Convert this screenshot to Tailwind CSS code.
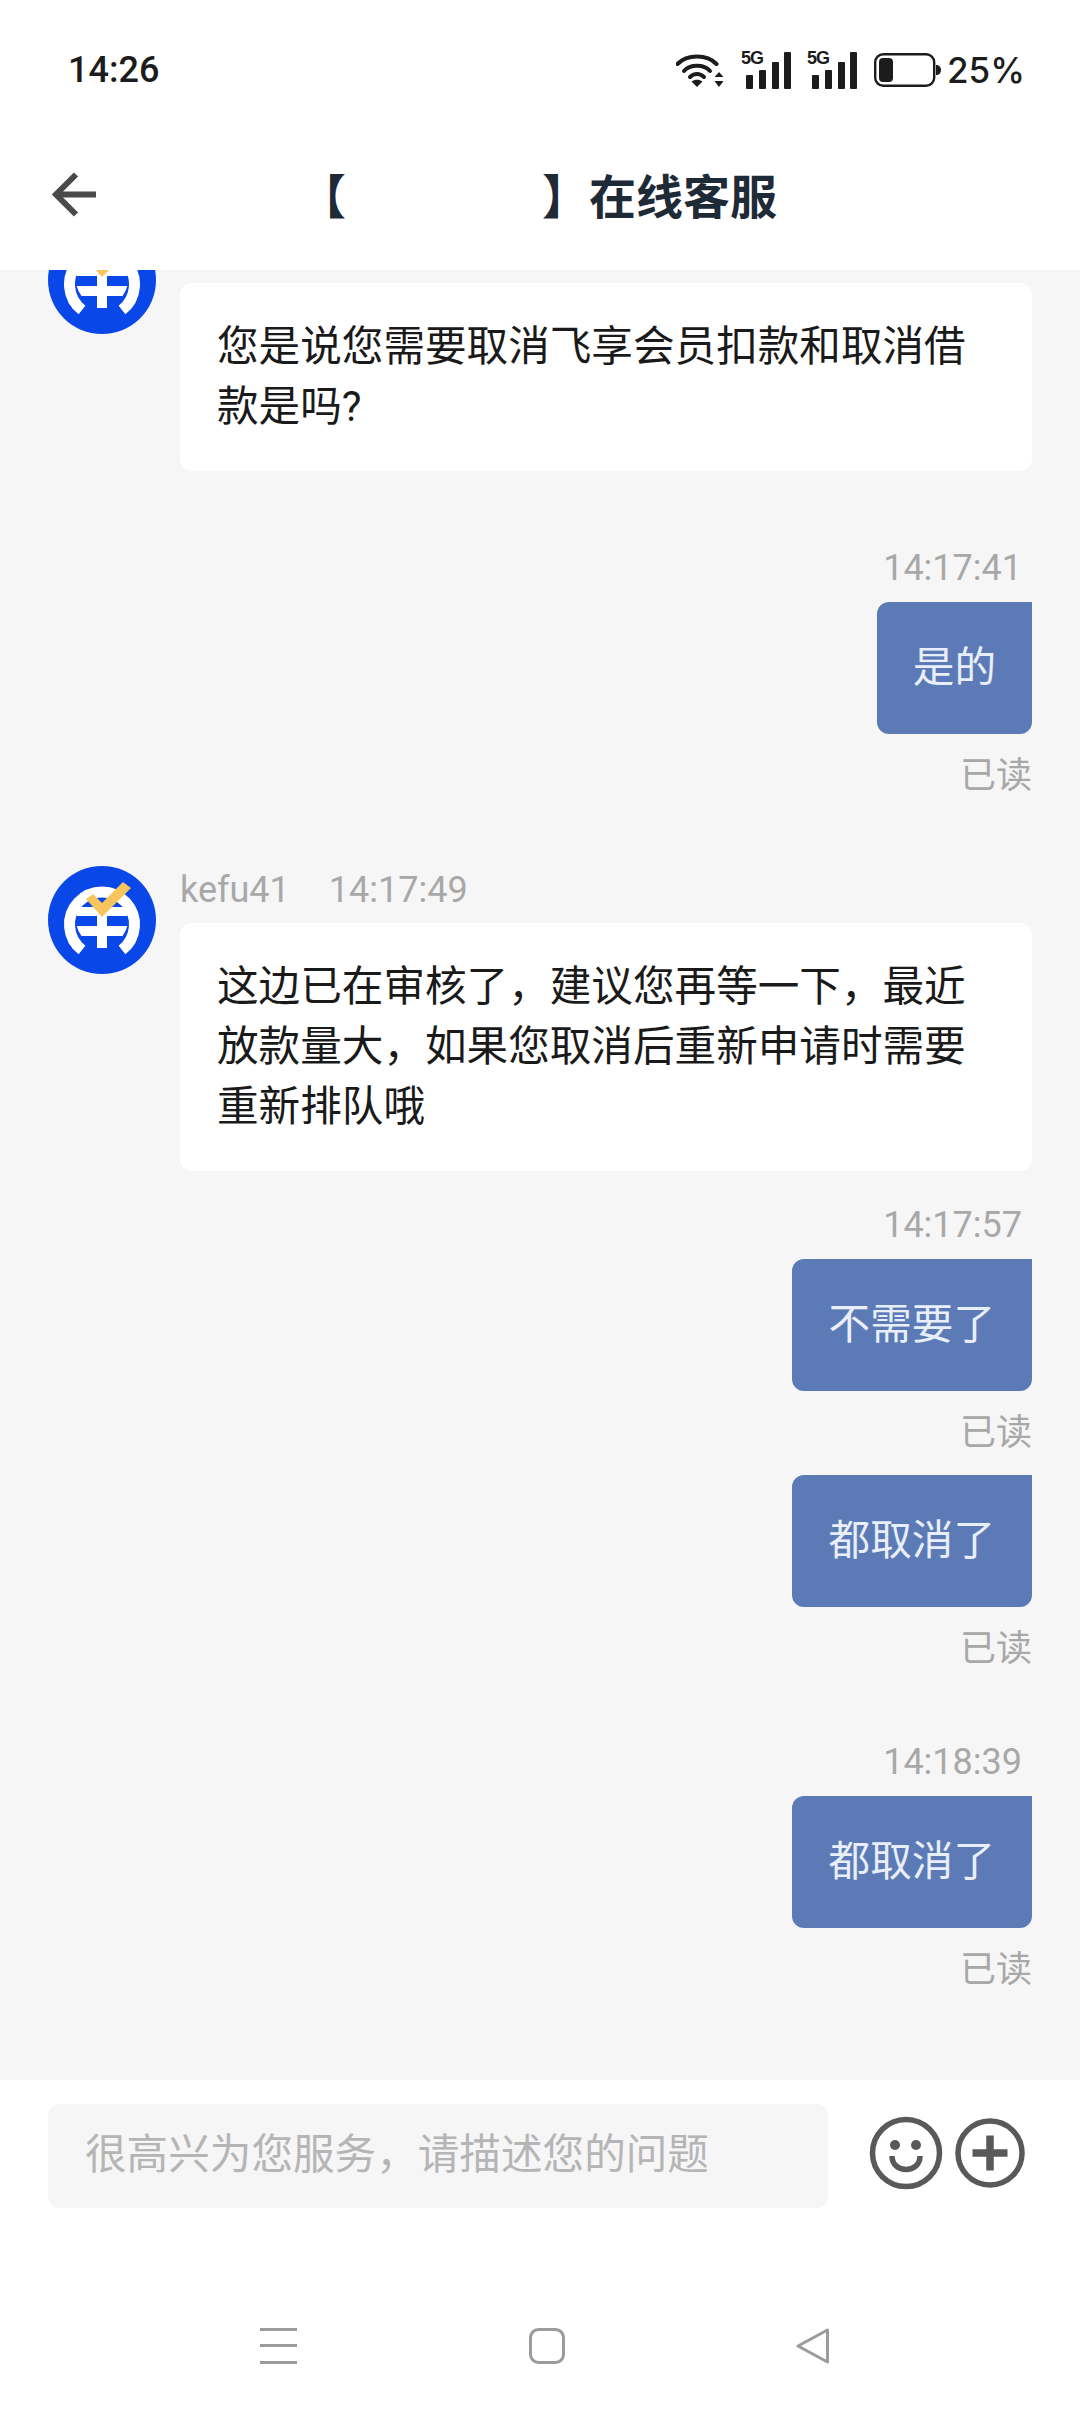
<!DOCTYPE html>
<html lang="zh-CN">
<head>
  <meta charset="UTF-8">
  <meta name="viewport" content="width=device-width, initial-scale=1">
  <title>在线客服</title>
  <script src="https://cdn.jsdelivr.net/npm/@tailwindcss/browser@4"></script>
</head>
<body class="bg-white font-['Roboto','Noto_Sans_CJK_SC',sans-serif]">
  <div class="w-[1080px] h-[2412px] flex flex-col overflow-hidden">

    <!-- Status bar -->
    <div class="h-[140px] shrink-0 flex items-center justify-between pl-[68px] pr-[55px] text-[#1c1c1c]">
      <span class="text-[36px] font-medium leading-none">14:26</span>
      <div class="flex items-center">
        <svg width="48" height="36" viewBox="0 0 48 36" fill="none" stroke="#1c1c1c" stroke-width="4" stroke-linecap="round">
          <path d="M1.5 12 C 11 2, 31 2, 40.5 12"/>
          <path d="M8 19 C 14 12, 28 12, 34 19"/>
          <path d="M14 25 C 18 21, 24 21, 28 25"/>
          <path d="M21 35 L15.5 29.5 C 19 27, 23 27, 26.5 29.5 Z" fill="#1c1c1c" stroke="none"/>
          <path d="M43 20 L47.5 25 H38.5 Z M43 35 L47.5 29 H38.5 Z" fill="#1c1c1c" stroke="none"/>
        </svg>
        <div class="relative ml-[17px] w-[50px] h-[38px]">
          <span class="absolute left-0 top-0 font-['Liberation_Sans'] text-[18px] font-bold leading-[14px] tracking-[-1px]">5G</span>
          <svg class="block" width="50" height="38" viewBox="0 0 50 38" fill="#1c1c1c">
            <rect x="5" y="24" width="7" height="14" rx="1"/>
            <rect x="18" y="19" width="7" height="19" rx="1"/>
            <rect x="31" y="11" width="7" height="27" rx="1"/>
            <rect x="43" y="1" width="7" height="37" rx="1"/>
          </svg>
        </div>
        <div class="relative ml-[16px] w-[50px] h-[38px]">
          <span class="absolute left-0 top-0 font-['Liberation_Sans'] text-[18px] font-bold leading-[14px] tracking-[-1px]">5G</span>
          <svg class="block" width="50" height="38" viewBox="0 0 50 38" fill="#1c1c1c">
            <rect x="5" y="24" width="7" height="14" rx="1"/>
            <rect x="18" y="19" width="7" height="19" rx="1"/>
            <rect x="31" y="11" width="7" height="27" rx="1"/>
            <rect x="43" y="1" width="7" height="37" rx="1"/>
          </svg>
        </div>
        <svg class="ml-[17px]" width="67" height="34" viewBox="0 0 67 34" fill="none">
          <rect x="1.2" y="1.2" width="59" height="31.6" rx="8" stroke="#1c1c1c" stroke-width="2.4"/>
          <rect x="5" y="5" width="14" height="24" rx="4" fill="#1c1c1c"/>
          <path d="M62 12 C 65 12, 67 14, 67 17 C 67 20, 65 22, 62 22 Z" fill="#1c1c1c"/>
        </svg>
        <span class="ml-[6px] font-['Inter'] text-[35px] font-medium leading-none">25%</span>
      </div>
    </div>

    <!-- Title bar -->
    <div class="h-[130px] shrink-0 relative flex items-center justify-center pb-[16px] pr-[4px]">
      <button class="absolute left-[50px] top-[29px]">
        <svg class="block" width="48" height="50" viewBox="0 0 48 50" fill="none" stroke="#4a4a4a" stroke-width="6">
          <path d="M46 25.5 H6"/>
          <path d="M26 5.5 L6 25.5 L26 45.5"/>
        </svg>
      </button>
      <h1 class="flex text-[47px] font-bold leading-none text-[#1f2a37]">
        <span>【</span><span class="w-[196px]"></span><span>】在线客服</span>
      </h1>
    </div>

    <!-- Messages -->
    <div class="h-[1810px] shrink-0 overflow-hidden bg-[#f6f6f6]">
      <div class="-mt-[44px] pl-[48px] pr-[48px]">

        <div class="flex gap-[24px]">
          <svg class="shrink-0" width="108" height="108" viewBox="0 0 108 108">
            <circle cx="54" cy="54" r="54" fill="#0a47e8"/>
            <path d="M34 84 A 32.5 32.5 0 1 1 74 84" fill="none" stroke="#fff" stroke-width="11"/>
            <path d="M31.5 41 H76.5 A26 26 0 0 1 79.7 50 H28.3 A26 26 0 0 1 31.5 41 Z M28.7 60 H79.3 A26 26 0 0 1 74.5 70 H33.5 A26 26 0 0 1 28.7 60 Z" fill="#fff"/>
            <rect x="49" y="48" width="10" height="34" fill="#fff"/>
            <path d="M38 33 L45 28 L54 37 L75 16 L83 22 L54 51 Z" fill="#f6c55c"/>
          </svg>
          <div class="w-[852px]">
            <div class="h-[57px]"></div>
            <div class="bg-white rounded-[12px] px-[37px] py-[34px] text-[41.6px] leading-[60px] text-[#1a1a1a]">您是说您需要取消飞享会员扣款和取消借款是吗?</div>
          </div>
        </div>

        <div class="mt-[75px] flex flex-col items-end">
          <div class="h-[44px] mb-[12px] pr-[10px] text-[36px] leading-[44px] text-[#a8a8a8]">14:17:41</div>
          <div class="bg-[#5c7bb6] rounded-[12px] rounded-tr-none px-[36px] py-[36px] text-[41.6px] leading-[60px] text-[#e9effa]">是的</div>
          <div class="h-[44px] mt-[20px] text-[36px] leading-[44px] text-[#a8a8a8]">已读</div>
        </div>

        <div class="mt-[68px] flex gap-[24px]">
          <svg class="shrink-0" width="108" height="108" viewBox="0 0 108 108">
            <circle cx="54" cy="54" r="54" fill="#0a47e8"/>
            <path d="M34 84 A 32.5 32.5 0 1 1 74 84" fill="none" stroke="#fff" stroke-width="11"/>
            <path d="M31.5 41 H76.5 A26 26 0 0 1 79.7 50 H28.3 A26 26 0 0 1 31.5 41 Z M28.7 60 H79.3 A26 26 0 0 1 74.5 70 H33.5 A26 26 0 0 1 28.7 60 Z" fill="#fff"/>
            <rect x="49" y="48" width="10" height="34" fill="#fff"/>
            <path d="M38 33 L45 28 L54 37 L75 16 L83 22 L54 51 Z" fill="#f6c55c"/>
          </svg>
          <div class="w-[852px]">
            <div class="h-[57px] flex gap-[39px] text-[36px] leading-[48px] text-[#a8a8a8]">
              <span>kefu41</span><span>14:17:49</span>
            </div>
            <div class="bg-white rounded-[12px] px-[37px] py-[34px] text-[41.6px] leading-[60px] text-[#1a1a1a]">这边已在审核了，建议您再等一下，最近放款量大，如果您取消后重新申请时需要重新排队哦</div>
          </div>
        </div>

        <div class="mt-[32px] flex flex-col items-end">
          <div class="h-[44px] mb-[12px] pr-[10px] text-[36px] leading-[44px] text-[#a8a8a8]">14:17:57</div>
          <div class="bg-[#5c7bb6] rounded-[12px] rounded-tr-none px-[37px] py-[36px] text-[41.6px] leading-[60px] text-[#e9effa]">不需要了</div>
          <div class="h-[44px] mt-[20px] text-[36px] leading-[44px] text-[#a8a8a8]">已读</div>
        </div>

        <div class="mt-[20px] flex flex-col items-end">
          <div class="bg-[#5c7bb6] rounded-[12px] rounded-tr-none px-[37px] py-[36px] text-[41.6px] leading-[60px] text-[#e9effa]">都取消了</div>
          <div class="h-[44px] mt-[20px] text-[36px] leading-[44px] text-[#a8a8a8]">已读</div>
        </div>

        <div class="mt-[69px] flex flex-col items-end">
          <div class="h-[44px] mb-[12px] pr-[10px] text-[36px] leading-[44px] text-[#a8a8a8]">14:18:39</div>
          <div class="bg-[#5c7bb6] rounded-[12px] rounded-tr-none px-[37px] py-[36px] text-[41.6px] leading-[60px] text-[#e9effa]">都取消了</div>
          <div class="h-[44px] mt-[20px] text-[36px] leading-[44px] text-[#a8a8a8]">已读</div>
        </div>

      </div>
    </div>

    <!-- Input row -->
    <div class="shrink-0 mt-[24px] h-[104px] pl-[48px] flex items-center">
      <input class="w-[780px] h-[104px] rounded-[12px] bg-[#f6f6f6] px-[37px] pb-[4px] text-[41.6px] outline-none placeholder:text-[#b5b5b5]" placeholder="很高兴为您服务，请描述您的问题">
      <svg class="ml-[41px] mb-[6px]" width="74" height="74" viewBox="0 0 74 74" fill="none" stroke="#595959" stroke-width="5.5">
        <circle cx="37" cy="37" r="33.5"/>
        <circle cx="26" cy="29" r="5" fill="#595959" stroke="none"/>
        <circle cx="47" cy="29" r="5" fill="#595959" stroke="none"/>
        <path d="M23 40 C 23 58, 51 58, 51 40"/>
      </svg>
      <svg class="ml-[12px] mb-[6px]" width="70" height="70" viewBox="0 0 70 70" fill="none" stroke="#595959">
        <circle cx="35" cy="35" r="32" stroke-width="5.5"/>
        <path d="M17.5 35 H52.5 M35 17.5 V52.5" stroke-width="7.5"/>
      </svg>
    </div>

    <!-- Android nav bar -->
    <div class="shrink-0 mt-[120px] pl-[260px] flex items-start">
      <svg width="37" height="36" viewBox="0 0 37 36" fill="#9b9b9b">
        <rect y="0" width="37" height="3"/>
        <rect y="16" width="37" height="3"/>
        <rect y="33" width="37" height="3"/>
      </svg>
      <svg class="ml-[232px]" width="36" height="36" viewBox="0 0 36 36" fill="none" stroke="#9b9b9b" stroke-width="3">
        <rect x="1.5" y="1.5" width="33" height="33" rx="8"/>
      </svg>
      <svg class="ml-[231px]" width="34" height="36" viewBox="0 0 34 36" fill="none" stroke="#9b9b9b" stroke-width="3" stroke-linejoin="round">
        <path d="M31.5 2 V34 L2 18 Z"/>
      </svg>
    </div>

  </div>
</body>
</html>
